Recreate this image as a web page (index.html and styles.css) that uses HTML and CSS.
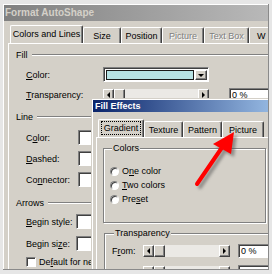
FILE: index.html
```html
<!DOCTYPE html>
<html lang="en">
<head>
    <meta charset="UTF-8">
    <title>Format AutoShape - Fill Effects</title>
    <link rel="stylesheet" href="styles.css">
</head>
<body>
    <div class="screen">
        <div class="shot">

            <!-- Format AutoShape dialog (behind) -->
            <div class="dlg">
                <div class="caption inactive">Format AutoShape</div>
                <div class="tabs main-tabs">
                    <div class="tab sel t-cl">Colors and Lines</div>
                    <div class="tab t-size">Size</div>
                    <div class="tab t-pos">Position</div>
                    <div class="tab off t-pic">Picture</div>
                    <div class="tab off t-tb">Text Box</div>
                    <div class="tab t-web">W</div>
                </div>
                <div class="panel">
                    <div class="sect s-fill"><span>Fill</span></div>
                    <div class="row r-color">
                        <label class="lbl wide"><u>C</u>olor:</label>
                        <div class="combo">
                            <div class="swatch"></div>
                            <div class="drop"></div>
                        </div>
                    </div>
                    <div class="row r-transp">
                        <label class="lbl wide"><u>T</u>ransparency:</label>
                        <div class="slider main-slider">
                            <div class="sbtn left"></div>
                            <div class="thumb"></div>
                            <div class="track"></div>
                            <div class="sbtn right"></div>
                        </div>
                        <div class="edit main-edit">0 %</div>
                    </div>

                    <div class="sect s-line"><span>Line</span></div>
                    <div class="row r-box first"><label class="lbl">C<u>o</u>lor:</label><div class="box"></div></div>
                    <div class="row r-box"><label class="lbl"><u>D</u>ashed:</label><div class="box"></div></div>
                    <div class="row r-box"><label class="lbl">Co<u>n</u>nector:</label><div class="box"></div></div>

                    <div class="sect s-arrows"><span>Arrows</span></div>
                    <div class="row r-box a-first"><label class="lbl narrow"><u>B</u>egin style:</label><div class="box"></div></div>
                    <div class="row r-box a-second"><label class="lbl narrow">Begin si<u>z</u>e:</label><div class="box"></div></div>
                    <div class="row r-check"><span class="check"></span><label>De<u>f</u>ault for new</label></div>
                </div>
            </div>

            <!-- Fill Effects dialog (on top) -->
            <div class="fe">
                <div class="caption active">Fill Effects</div>
                <div class="tabs fe-tabs">
                    <div class="tab sel t-grad"><span class="focus">Gradient</span></div>
                    <div class="tab t-tex">Texture</div>
                    <div class="tab t-pat">Pattern</div>
                    <div class="tab t-pict">Picture</div>
                </div>
                <div class="panel fe-panel">
                    <fieldset class="grp g-colors">
                        <legend>Colors</legend>
                        <div class="opt"><span class="radio"></span><label>O<u>n</u>e color</label></div>
                        <div class="opt"><span class="radio"></span><label><u>T</u>wo colors</label></div>
                        <div class="opt"><span class="radio"></span><label>Pre<u>s</u>et</label></div>
                    </fieldset>
                    <fieldset class="grp g-transp">
                        <legend>Transparency</legend>
                        <div class="row fe-row">
                            <label class="lbl from">F<u>r</u>om:</label>
                            <div class="slider fe-slider">
                                <div class="sbtn left"></div>
                                <div class="thumb"></div>
                                <div class="track"></div>
                                <div class="sbtn right"></div>
                            </div>
                            <div class="edit fe-edit">0 %</div>
                        </div>
                        <div class="row fe-row second">
                            <label class="lbl from"></label>
                            <div class="slider fe-slider">
                                <div class="sbtn left"></div>
                                <div class="thumb"></div>
                                <div class="track"></div>
                                <div class="sbtn right"></div>
                            </div>
                            <div class="edit fe-edit"></div>
                        </div>
                    </fieldset>
                </div>
            </div>
        </div>

        <!-- red callout arrow pointing at the Picture tab -->
        <svg class="arrow" width="272" height="274" viewBox="0 0 272 274">
            <defs>
                <filter id="soft" x="-20%" y="-20%" width="140%" height="140%">
                    <feGaussianBlur stdDeviation="1.4"/>
                </filter>
            </defs>
            <g transform="translate(3 3)" fill="#555" stroke="#555" opacity="0.55" filter="url(#soft)">
                <line x1="197" y1="184" x2="223" y2="146" stroke-width="4" stroke-linecap="round"/>
                <polygon points="234,132 213,144 231,154" stroke="none"/>
            </g>
            <line x1="197" y1="184" x2="223" y2="146" stroke="#f00" stroke-width="4" stroke-linecap="round"/>
            <polygon points="234,132 213,144 231,154" fill="#f00"/>
        </svg>
    </div>
</body>
</html>
```

FILE: styles.css
```css
body {
    margin: 0;
    font-family: "Liberation Sans", Arial, sans-serif;
    font-size: 9px;
    color: #000;
}
u {
    text-decoration: underline;
    text-underline-offset: 1px;
}
.screen {
    position: relative;
    width: 272px;
    height: 274px;
    box-sizing: border-box;
    padding: 4px 3px 4px 3px;
    background-color: #e6e6e6;
}
.shot {
    position: relative;
    width: 266px;
    height: 266px;
    overflow: hidden;
    box-sizing: border-box;
    border-right: 1px solid #8a8a8a;
    border-bottom: 1px solid #8a8a8a;
}

/* windows */
.dlg {
    width: 300px;
    height: 290px;
    box-sizing: border-box;
    background-color: #d4d0c8;
    border: 1px solid;
    border-color: #fff #808080 #808080 #fff;
}
.caption {
    font-weight: bold;
    color: #fff;
    white-space: nowrap;
}
.caption.inactive {
    height: 16px;
    line-height: 16px;
    padding-left: 1px;
    color: #d4d0c8;
    font-size: 10px;
    background: linear-gradient(90deg, #808080, #c0c0c0);
}
.caption.active {
    height: 12px;
    line-height: 12px;
    padding-left: 2px;
    background: linear-gradient(90deg, #0a246a, #a6caf0);
}
.fe {
    position: absolute;
    left: 88px;
    top: 94px;
    width: 200px;
    height: 200px;
    padding: 1px;
    background-color: #d4d0c8;
    border: 1px solid #d4d0c8;
    box-shadow: inset 1px 1px 0 #fff;
}

/* tabs */
.tabs {
    display: flex;
    align-items: flex-end;
}
.main-tabs {
    height: 18px;
    margin-top: 4px;
    padding-left: 6px;
}
.fe-tabs {
    height: 18px;
    margin-top: 7px;
    padding-left: 5px;
}
.tab {
    box-sizing: border-box;
    height: 16px;
    display: flex;
    align-items: center;
    justify-content: center;
    white-space: nowrap;
    border: 1px solid;
    border-bottom: none;
    border-color: #fff #404040 transparent #fff;
    border-radius: 2px 2px 0 0;
    box-shadow: inset -1px 0 0 #808080;
}
.tab.sel {
    height: 18px;
    padding-bottom: 1px;
}
.tab.off {
    color: #808080;
    text-shadow: 1px 1px 0 #fff;
}
.t-cl { width: 73px; }
.t-size { width: 38px; }
.t-pos { width: 41px; }
.t-pic { width: 42px; }
.t-tb { width: 45px; }
.t-web { width: 40px; justify-content: flex-start; padding-left: 7px; }
.t-grad { width: 46px; }
.t-tex { width: 39px; }
.t-pat { width: 39px; }
.t-pict { width: 42px; }
.focus {
    outline: 1px dotted #000;
    outline-offset: 1px;
    padding: 0 1px;
}

/* tab page */
.panel {
    margin-left: 4px;
    height: 260px;
    border-top: 1px solid #fff;
    border-left: 1px solid #fff;
}
.sect {
    display: flex;
    align-items: center;
    gap: 4px;
    height: 12px;
    padding-left: 7px;
}
.sect::after {
    content: "";
    flex: 1;
    border-top: 1px solid #808080;
    border-bottom: 1px solid #fff;
}
.s-fill { margin-top: 5px; }
.s-line, .s-arrows { margin-top: 10px; }

.row {
    display: flex;
    align-items: center;
    padding-left: 17px;
}
.lbl {
    flex: none;
    width: 52px;
    white-space: nowrap;
}
.lbl.wide { width: 77px; }
.lbl.narrow { width: 50px; }
.r-color { height: 15px; margin-top: 6px; }
.r-transp { height: 13px; margin-top: 6px; }
.r-box { height: 15px; margin-top: 6px; }
.r-box.first { margin-top: 7px; }
.r-box.a-first { margin-top: 5px; }
.r-box.a-second { margin-top: 7px; }
.r-check { height: 12px; margin-top: 5px; gap: 3px; }

/* controls */
.combo, .box, .edit, .check {
    box-sizing: border-box;
    background-color: #fff;
    border: 1px solid;
    border-color: #808080 #fff #fff #808080;
    box-shadow: inset 1px 1px 0 #404040;
}
.combo {
    display: flex;
    width: 106px;
    height: 15px;
    padding: 2px 1px 1px 2px;
    gap: 1px;
}
.swatch {
    flex: 1;
    background-color: #b6e2e4;
    outline: 1px solid #1a1a1a;
    outline-offset: -1px;
}
.drop, .sbtn, .thumb {
    box-sizing: border-box;
    background-color: #d4d0c8;
    border: 1px solid;
    border-color: #fff #404040 #404040 #fff;
    box-shadow: inset -1px -1px 0 #808080;
    display: flex;
    align-items: center;
    justify-content: center;
}
.drop {
    width: 12px;
}
.drop::before {
    content: "";
    border-top: 3px solid #000;
    border-left: 3px solid transparent;
    border-right: 3px solid transparent;
}
.box {
    width: 40px;
    height: 15px;
}
.check {
    width: 10px;
    height: 10px;
}

.slider {
    display: flex;
    height: 12px;
}
.main-slider { width: 106px; }
.fe-slider { width: 87px; }
.sbtn, .thumb { width: 11px; }
.sbtn.left::before {
    content: "";
    border-right: 3px solid #000;
    border-top: 3px solid transparent;
    border-bottom: 3px solid transparent;
}
.sbtn.right::before {
    content: "";
    border-left: 3px solid #000;
    border-top: 3px solid transparent;
    border-bottom: 3px solid transparent;
}
.track {
    flex: 1;
    background-color: #ebe9e5;
}
.edit {
    height: 14px;
    line-height: 12px;
    padding-left: 2px;
    white-space: nowrap;
}
.main-edit {
    width: 44px;
    margin-left: 20px;
}
.fe-edit {
    width: 40px;
    margin-left: 8px;
}

/* Fill Effects page */
.fe-panel {
    margin-left: 3px;
}
.grp {
    margin: 0;
    box-sizing: border-box;
    border: 1px solid #808080;
    box-shadow: inset 1px 1px 0 #fff, 1px 1px 0 #fff;
}
.grp legend {
    padding: 0 1px;
    margin-left: 2px;
    height: 11px;
    line-height: 11px;
    background-color: #d4d0c8;
}
.g-colors {
    width: 163px;
    height: 80px;
    margin: 5px 0 0 6px;
    padding: 10px 0 0 6px;
}
.opt {
    display: flex;
    align-items: center;
    gap: 3px;
    height: 14px;
}
.radio {
    box-sizing: border-box;
    width: 9px;
    height: 9px;
    border-radius: 50%;
    background-color: #fff;
    border: 1px solid;
    border-color: #808080 #fff #fff #808080;
    box-shadow: inset 1px 1px 0 #404040;
}
.g-transp {
    width: 180px;
    height: 60px;
    margin: 5px 0 0 7px;
    padding: 5px 0 0 7px;
}
.fe-row {
    height: 14px;
    padding-left: 0;
}
.fe-row.second { margin-top: 7px; }
.lbl.from { width: 31px; }

.arrow {
    position: absolute;
    left: 0;
    top: 0;
}
```
